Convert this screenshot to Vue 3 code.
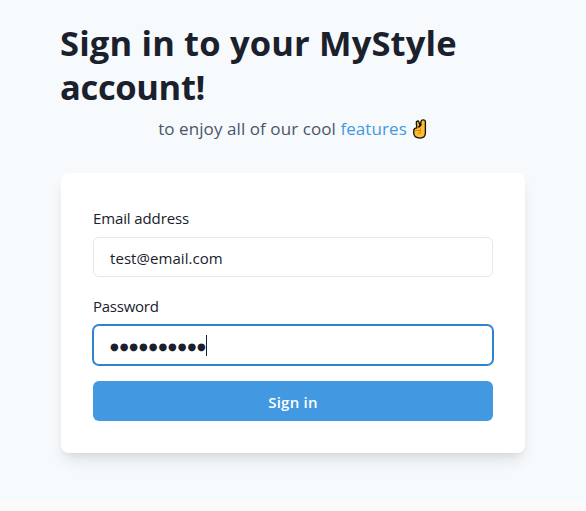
<script setup>
import { ref } from 'vue'
const email = ref('test@email.com')
const masked = '●'.repeat(10)
</script>

<template>
  <main class="page">
    <header class="intro">
      <h1><span class="line one">Sign in to your MyStyle</span> <br /><span class="line two">account!</span></h1>
      <p class="sub">
        <span class="copy">to enjoy all of our cool <a class="link">features</a></span>
        <svg class="hand" viewBox="0 0 16 20" role="img" aria-label="Victory hand">
          <path d="M1.8 11.2c.2-1.6 1.3-2.3 3-2.3L4.3 3.8C4.1 1.9 6.3 1.3 6.9 3l1.3 3.7.9-4.6C9.4.9 10.2.8 11 .8c1.8 0 2.5.8 2.4 2.4v10.6c0 3.3-2.1 5.3-5.4 5.3-3.8 0-6.2-1.9-6.3-5.3z" fill="#fdbd2c" stroke="#17120b" stroke-width="1.35" stroke-linejoin="round" />
          <path d="M6.4 8.4 8.2 6.7l1.3-1.4" fill="none" stroke="#17120b" stroke-width="1.6" />
          <path d="M3 11.5h5.4v2.7H5.8M8.4 11.5V9.2" fill="none" stroke="#d18a20" stroke-width="1" />
        </svg>
      </p>
    </header>
    <form class="card" @submit.prevent>
      <label class="label email-label" for="email"><span>Email address</span></label>
      <input id="email" v-model="email" class="field" type="text" />
      <div class="label password-label"><span>Password</span></div>
      <div class="field focused"><span class="dots">{{ masked }}</span><span class="caret"></span></div>
      <button class="submit" type="submit">Sign in</button>
    </form>
  </main>
</template>

<style>
body { background: #fafafa; }
</style>

<style scoped>
* { box-sizing: border-box; }
.page {
  height: 500px;
  padding: 21px 61px 0;
  background: #f6fafd;
  color: #1a202c;
  font-family: "Open Sans", "Noto Sans", sans-serif;
  overflow: hidden;
}
.intro { height: 152px; }
h1 { margin: 0 0 1px -1px; font-size: 34.5px; line-height: 44px; font-weight: 700; white-space: nowrap; }
.one { letter-spacing: 0.16px; }
.two { letter-spacing: -0.35px; }
.sub {
  margin: 0;
  height: 38px;
  display: flex;
  justify-content: center;
  align-items: flex-start;
  gap: 5px;
  color: #4a5568;
  font-size: 17px;
  letter-spacing: 0.08px;
  line-height: 38px;
  white-space: nowrap;
}
.link { color: #4299e1; }
.hand { width: 16px; height: 20px; margin-top: 9px; }
.card {
  width: 464px;
  height: 280px;
  padding: 32px;
  border-radius: 8px;
  background: #fff;
  box-shadow: 0 10px 15px -3px rgba(0, 0, 0, .1), 0 4px 6px -2px rgba(0, 0, 0, .05);
}
.label { display: block; height: 32px; font-size: 15px; line-height: 27px; letter-spacing: -0.12px; }
.field {
  display: flex;
  align-items: center;
  width: 400px;
  height: 40px;
  margin: 0;
  padding: 2px 16px 0;
  border: 1px solid #e2e8f0;
  border-radius: 6px;
  background: #fff;
  color: #1a202c;
  font: 15px "Open Sans", "Noto Sans", sans-serif;
  letter-spacing: 0.06px;
  outline: none;
}
.password-label { margin-top: 16px; letter-spacing: -0.25px; }
.focused { border-color: #3182ce; box-shadow: 0 0 0 1px #3182ce; }
.dots { font: 10px/20px "DejaVu Sans", sans-serif; letter-spacing: 0.95px; padding-top: 1px; }
.caret { width: 1px; height: 21px; margin-top: -1px; margin-left: -1px; background: #1a202c; }
.submit {
  display: block;
  width: 400px;
  height: 40px;
  margin: 16px 0 0;
  padding: 2px 0 0;
  border: 0;
  border-radius: 6px;
  background: #4299e1;
  color: #fff;
  font: 600 15px "Open Sans", "Noto Sans", sans-serif;
  letter-spacing: 0.25px;
}
</style>
